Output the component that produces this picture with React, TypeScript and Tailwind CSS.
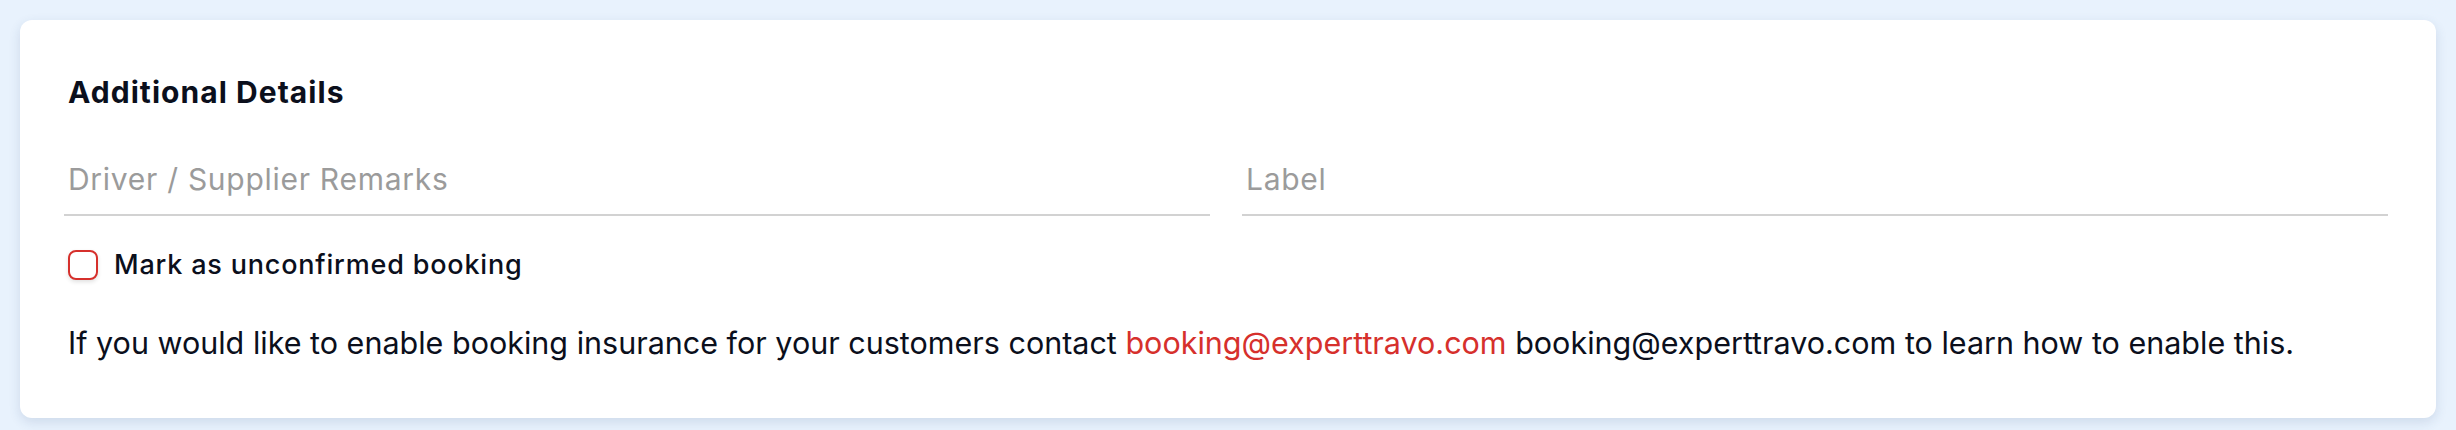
import { useState } from "react";

export default function App() {
  const [unconfirmed, setUnconfirmed] = useState(false);
  const [remarks, setRemarks] = useState("");
  const [label, setLabel] = useState("");

  return (
    <div className="min-h-[430px] bg-[#e8f2fd] p-5 font-['Inter',sans-serif] text-[#0b0f1c]">
      <div className="rounded-xl bg-white pb-[55px] pl-[44px] pr-[48px] pt-[54px] shadow-[0_4px_12px_rgba(40,70,120,0.14)]">
        <h2 className="pl-1 text-[30px] font-bold leading-[36px] tracking-[0.035em]">Additional Details</h2>

        <div className="mt-[51px] grid grid-cols-2 gap-8">
          <input
            value={remarks}
            onChange={(e) => setRemarks(e.target.value)}
            placeholder="Driver / Supplier Remarks"
            className="block w-full border-b-2 border-[#d2d2d2] pb-[17px] pl-1 text-[30px] leading-[36px] tracking-[0.024em] outline-none placeholder:text-[#9b9b9b]"
          />
          <input
            value={label}
            onChange={(e) => setLabel(e.target.value)}
            placeholder="Label"
            className="block w-full border-b-2 border-[#d2d2d2] pb-[17px] pl-1 text-[30px] leading-[36px] tracking-[0.024em] outline-none placeholder:text-[#9b9b9b]"
          />
        </div>

        <label className="mt-[31px] flex cursor-pointer items-center gap-4 pl-1">
          <span
            className={
              unconfirmed
                ? "flex h-[30px] w-[30px] items-center justify-center rounded-lg border-2 border-[#d6302c] bg-[#d6302c] shadow-[0_2px_4px_rgba(0,0,0,0.12)]"
                : "flex h-[30px] w-[30px] items-center justify-center rounded-lg border-2 border-[#d6302c] bg-white shadow-[0_2px_4px_rgba(0,0,0,0.12)]"
            }
          >
            {unconfirmed && (
              <svg viewBox="0 0 24 24" className="h-5 w-5" fill="none" stroke="white" strokeWidth={3}>
                <path d="M5 12l5 5L19 7" />
              </svg>
            )}
          </span>
          <input
            type="checkbox"
            className="hidden"
            checked={unconfirmed}
            onChange={(e) => setUnconfirmed(e.target.checked)}
          />
          <span className="text-[27px] font-medium leading-[36px] tracking-[0.03em]">Mark as unconfirmed booking</span>
        </label>

        <p className="mt-[40px] pl-1 text-[30.5px] leading-[40px]">
          If you would like to enable booking insurance for your customers contact{" "}
          <a href="mailto:booking@experttravo.com" className="text-[#d6302c]">
            booking@experttravo.com
          </a>{" "}
          booking@experttravo.com to learn how to enable this.
        </p>
      </div>
    </div>
  );
}
